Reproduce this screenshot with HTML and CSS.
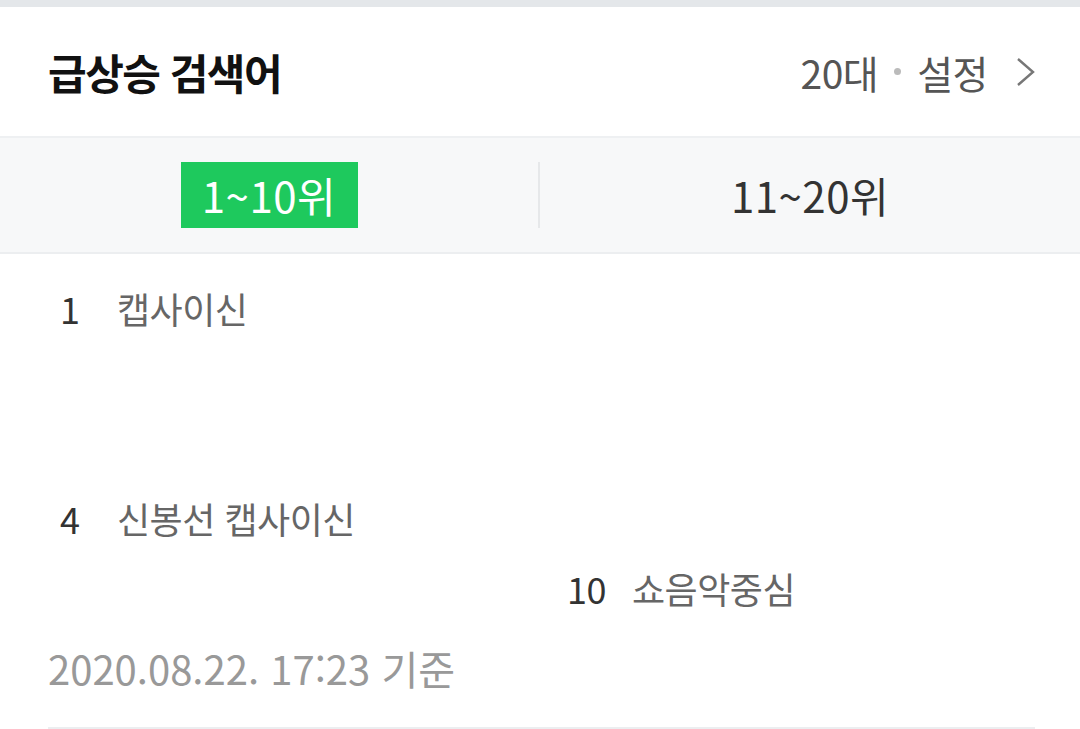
FILE: index.html
```html
<!DOCTYPE html>
<html lang="ko">
  <head>
    <meta charset="utf-8" />
    <meta name="viewport" content="width=device-width" />
    <title>급상승 검색어</title>
    <link rel="stylesheet" href="styles.css">
  </head>
  <body>
    <div class="topbar"></div>
    <header class="head">
      <h1 class="title">급상승 검색어</h1>
      <a class="setting" href="#">
        <span>20대</span>
        <i class="dot"></i>
        <span>설정</span>
        <svg class="chev" width="20" height="30" viewBox="0 0 20 30">
          <polyline points="2,2 17,15 2,28" fill="none" stroke="#777" stroke-width="2.4" />
        </svg>
      </a>
    </header>
    <nav class="tabs">
      <a class="tab on" href="#"><span>1~10위</span></a>
      <a class="tab" href="#"><span>11~20위</span></a>
    </nav>
    <ol class="rank">
      <li><b>1</b><span>캡사이신</span></li>
      <li></li>
      <li></li>
      <li><b>4</b><span>신봉선 캡사이신</span></li>
      <li></li>
      <li></li>
      <li></li>
      <li></li>
      <li></li>
      <li><b>10</b><span>쇼음악중심</span></li>
    </ol>
    <p class="time">2020.08.22. 17:23 기준</p>
  </body>
</html>
```

FILE: styles.css
```css
html,
body {
  margin: 0;
  padding: 0;
  background: #fff;
  font-family: "Noto Sans CJK KR", "Noto Sans", sans-serif;
  color: #222;
}
.topbar {
  height: 7px;
  background: #e4e7ea;
}
.head {
  height: 129px;
  padding: 0 44px 0 48px;
  display: flex;
  align-items: center;
  justify-content: space-between;
  border-bottom: 2px solid #eef0f2;
}
.title {
  margin: 0;
  font-size: 42px;
  font-weight: 700;
  color: #111;
  letter-spacing: -1.5px;
}
.setting {
  display: flex;
  align-items: center;
  gap: 16px;
  font-size: 39px;
  color: #555;
  text-decoration: none;
  letter-spacing: -0.5px;
}
.dot {
  width: 7px;
  height: 7px;
  border-radius: 50%;
  background: #bbb;
}
.chev {
  margin-left: 12px;
}
.tabs {
  height: 114px;
  display: grid;
  grid-template-columns: 1fr 1fr;
  align-items: center;
  background: #f7f8f9;
  border-bottom: 2px solid #eceef0;
}
.tab {
  display: flex;
  justify-content: center;
  font-size: 42px;
  color: #333;
  text-decoration: none;
  letter-spacing: 0.5px;
}
.tab:first-child {
  border-right: 2px solid #e6e8ea;
}
.tab span {
  height: 66px;
  line-height: 66px;
}
.tab.on span {
  width: 177px;
  text-align: center;
  background: #1ec95d;
  color: #fff;
}
.rank {
  list-style: none;
  margin: 0;
  padding: 19px 48px 0;
  display: grid;
  grid-template-columns: 1fr 1fr;
  grid-template-rows: repeat(5, 70px);
  grid-auto-flow: column;
  column-gap: 30px;
}
.rank li {
  display: flex;
  align-items: center;
  padding-left: 12px;
  font-size: 36px;
  letter-spacing: -0.5px;
}
.rank b {
  font-weight: 400;
  color: #333;
  min-width: 31px;
  padding-right: 26px;
}
.rank span {
  color: #666;
}
.time {
  margin: 16px 45px 0 48px;
  padding-bottom: 30px;
  border-bottom: 2px solid #eceef0;
  font-size: 40px;
  color: #999;
}
```
